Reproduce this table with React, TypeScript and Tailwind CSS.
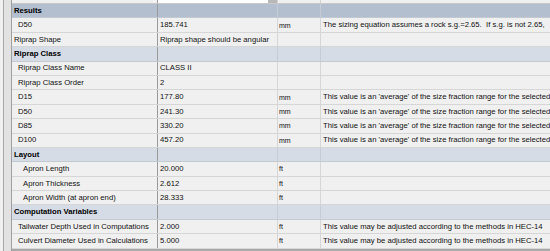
import React from "react"

type Row =
  | { kind: "header"; label: string; selected?: boolean }
  | { kind: "item"; label: string; indent: number; value: string; unit?: string; note?: string }

const AVG = "This value is an 'average' of the size fraction range for the selected"
const HEC = "This value may be adjusted according to the methods in HEC-14"

const rows: Row[] = [
  { kind: "header", label: "Results", selected: true },
  { kind: "item", label: "D50", indent: 6, value: "185.741", unit: "mm", note: "The sizing equation assumes a rock s.g.=2.65.  If s.g. is not 2.65," },
  { kind: "item", label: "Riprap Shape", indent: 2, value: "Riprap shape should be angular" },
  { kind: "header", label: "Riprap Class" },
  { kind: "item", label: "Riprap Class Name", indent: 6, value: "CLASS II" },
  { kind: "item", label: "Riprap Class Order", indent: 6, value: "2" },
  { kind: "item", label: "D15", indent: 6, value: "177.80", unit: "mm", note: AVG },
  { kind: "item", label: "D50", indent: 6, value: "241.30", unit: "mm", note: AVG },
  { kind: "item", label: "D85", indent: 6, value: "330.20", unit: "mm", note: AVG },
  { kind: "item", label: "D100", indent: 6, value: "457.20", unit: "mm", note: AVG },
  { kind: "header", label: "Layout" },
  { kind: "item", label: "Apron Length", indent: 11, value: "20.000", unit: "ft" },
  { kind: "item", label: "Apron Thickness", indent: 11, value: "2.612", unit: "ft" },
  { kind: "item", label: "Apron Width (at apron end)", indent: 11, value: "28.333", unit: "ft" },
  { kind: "header", label: "Computation Variables" },
  { kind: "item", label: "Tailwater Depth Used in Computations", indent: 6, value: "2.000", unit: "ft", note: HEC },
  { kind: "item", label: "Culvert Diameter Used in Calculations", indent: 6, value: "5.000", unit: "ft", note: HEC },
]

const indentClass: Record<number, string> = {
  2: "pl-[2px]",
  6: "pl-[6px]",
  11: "pl-[11px]",
}

const App = () => {
  return (
    <div
      className="flex w-[550px] h-[251px] overflow-hidden bg-[#f0f0f0] text-[#111111] text-[7.7px] leading-none"
      style={{ fontFamily: '"Liberation Sans", Arial, sans-serif' }}
    >
      {/* LEFT STRIP */}
      <div className="flex w-[12px] h-full">
        <div className="w-[3px] bg-[#f0f0f0]" />
        <div className="w-[1px] bg-[#a8a8a8]" />
        <div className="w-[7px] bg-[#e2e2e2]" />
        <div className="w-[1px] bg-[#a0a0a0]" />
      </div>

      {/* GRID */}
      <div className="flex flex-col flex-1 min-w-0">

        {/* partially visible row above */}
        <div className="flex h-[4px] border-b border-[#c8c8c8]">
          <div className="w-[146px] shrink-0 border-r border-[#9a9a9a] bg-[#f0f0f0]" />
          <div className="w-[120px] shrink-0 flex border-r border-[#d2d2d2]">
            <div className="flex-1 bg-white" />
            <div className="w-[9px] bg-[#b8b8b8]" />
          </div>
          <div className="w-[43px] shrink-0 border-r border-[#d2d2d2]" />
          <div className="flex-1" />
        </div>

        {rows.map((row, i) =>
          row.kind === "header" ? (
            <div
              key={i}
              className={`flex h-[14.4px] items-center border-b border-[#c4cad2] ${
                row.selected ? "bg-[#b3bfcf]" : "bg-[#d6dce5]"
              }`}
            >
              <div className="w-[146px] shrink-0 h-full flex items-center pl-[2px] border-r border-[#9a9a9a] font-bold text-black">
                {row.label}
              </div>
              <div className="w-[120px] shrink-0 h-full border-r border-[#c6ccd4]" />
              <div className="w-[43px] shrink-0 h-full border-r border-[#c6ccd4]" />
              <div className="flex-1" />
            </div>
          ) : (
            <div key={i} className="flex h-[14.4px] items-center border-b border-[#d6d6d6] bg-[#f0f0f0]">
              <div
                className={`w-[146px] shrink-0 h-full flex items-center border-r border-[#9a9a9a] whitespace-nowrap overflow-hidden ${indentClass[row.indent]}`}
              >
                {row.label}
              </div>
              <div className="w-[120px] shrink-0 h-full flex items-center pl-[2px] border-r border-[#d6d6d6] whitespace-nowrap overflow-hidden">
                {row.value}
              </div>
              <div className="w-[43px] shrink-0 h-full flex items-center pl-[1px] border-r border-[#d6d6d6] text-[7px]">
                {row.unit}
              </div>
              <div className="flex-1 min-w-0 h-full flex items-center pl-[2px] whitespace-pre overflow-hidden">
                {row.note}
              </div>
            </div>
          )
        )}

        {/* bottom scroll bar edge */}
        <div className="flex-1 bg-[#a9a9a9]" />
      </div>
    </div>
  )
}

export default App
